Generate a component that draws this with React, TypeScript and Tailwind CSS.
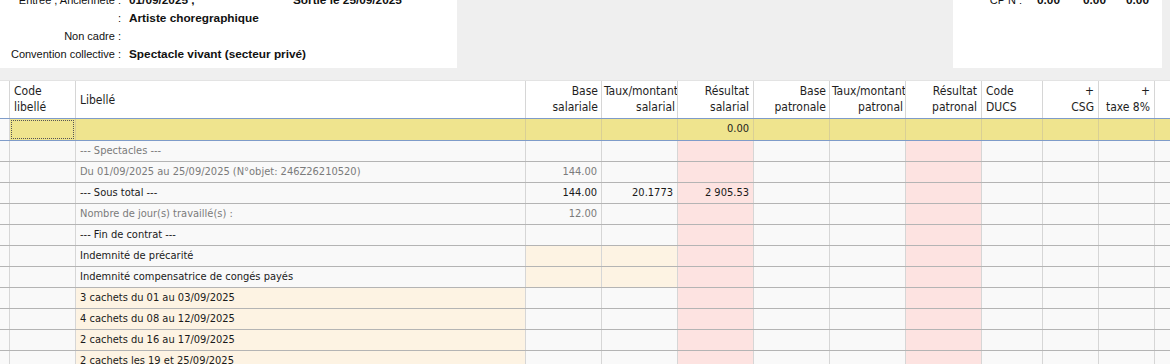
import React from "react";

type Row = {
  lib: string;
  gray?: boolean;
  base?: string;
  taux?: string;
  res?: string;
  creamBase?: boolean;
  creamLib?: boolean;
};

const rows: Row[] = [
  { lib: "--- Spectacles ---", gray: true },
  { lib: "Du 01/09/2025 au 25/09/2025 (N°objet: 246Z26210520)", gray: true, base: "144.00" },
  { lib: "--- Sous total ---", base: "144.00", taux: "20.1773", res: "2 905.53" },
  { lib: "Nombre de jour(s) travaillé(s) :", gray: true, base: "12.00" },
  { lib: "--- Fin de contrat ---" },
  { lib: "Indemnité de précarité", creamBase: true },
  { lib: "Indemnité compensatrice de congés payés", creamBase: true },
  { lib: "3 cachets du 01 au 03/09/2025", creamLib: true },
  { lib: "4 cachets du 08 au 12/09/2025", creamLib: true },
  { lib: "2 cachets du 16 au 17/09/2025", creamLib: true },
  { lib: "2 cachets les 19 et 25/09/2025", creamLib: true },
];

const cell = "h-full border-r border-[#d6d6d6] px-[4px] whitespace-nowrap overflow-hidden";

function Header() {
  return (
    <div className="flex h-[38px] bg-white border-b border-[#7f9cc9] text-[12px] leading-[16px] text-[#1e1e1e]">
      <div className="w-[10px] h-full border-r border-[#d6d6d6]" />
      <div className={`w-[66px] pt-[2px] ${cell}`}>Code<br />libellé</div>
      <div className={`w-[450px] flex items-center ${cell}`}>Libellé</div>
      <div className={`w-[76px] pt-[2px] text-right !px-[3px] ${cell}`}>Base<br />salariale</div>
      <div className={`w-[76px] pt-[2px] text-right !px-[2px] ${cell}`}>Taux/montant<br />salarial</div>
      <div className={`w-[76px] pt-[2px] text-right ${cell}`}>Résultat<br />salarial</div>
      <div className={`w-[76px] pt-[2px] text-right !px-[3px] ${cell}`}>Base<br />patronale</div>
      <div className={`w-[76px] pt-[2px] text-right !px-[2px] ${cell}`}>Taux/montant<br />patronal</div>
      <div className={`w-[76px] pt-[2px] text-right ${cell}`}>Résultat<br />patronal</div>
      <div className={`w-[61px] pt-[2px] ${cell}`}>Code<br />DUCS</div>
      <div className={`w-[56px] pt-[2px] text-right ${cell}`}>+<br />CSG</div>
      <div className={`w-[56px] pt-[2px] text-right ${cell}`}>+<br />taxe 8%</div>
      <div className="flex-1" />
    </div>
  );
}

function SelectedRow() {
  const y = "h-full border-r border-[#d9cf95]";
  return (
    <div className="flex h-[22px] bg-[#efe48e] border-b border-[#7f9cc9] text-[11px] text-[#1e1e1e]">
      <div className="w-[10px] h-full bg-[#f9f9f9] border-r border-[#d6d6d6]" />
      <div className={`w-[66px] p-[1px] ${y}`}>
        <div className="h-full border border-dotted border-[#555]" />
      </div>
      <div className={`w-[450px] ${y}`} />
      <div className={`w-[76px] ${y}`} />
      <div className={`w-[76px] ${y}`} />
      <div className={`w-[76px] flex items-center justify-end px-[4px] ${y}`}>0.00</div>
      <div className={`w-[76px] ${y}`} />
      <div className={`w-[76px] ${y}`} />
      <div className={`w-[76px] ${y}`} />
      <div className={`w-[61px] ${y}`} />
      <div className={`w-[56px] ${y}`} />
      <div className={`w-[56px] ${y}`} />
      <div className="flex-1" />
    </div>
  );
}

function DataRow({ r }: { r: Row }) {
  const txt = r.gray ? "text-[#7b7b7b]" : "text-[#1a1a1a]";
  const c = "h-full border-r border-[#d6d6d6] flex items-center px-[4px] whitespace-nowrap overflow-hidden";
  return (
    <div className={`flex h-[21px] border-b border-[#b4b4b4] bg-[#f9f9f9] text-[11px] ${txt}`}>
      <div className="w-[10px] h-full border-r border-[#d6d6d6]" />
      <div className={`w-[66px] ${c}`} />
      <div className={`w-[450px] ${c} ${r.creamLib ? "bg-[#fdf3e3]" : ""}`}>{r.lib}</div>
      <div className={`w-[76px] justify-end ${c} ${r.creamBase ? "bg-[#fdf3e3]" : ""}`}>{r.base}</div>
      <div className={`w-[76px] justify-end ${c} ${r.creamBase ? "bg-[#fdf3e3]" : ""}`}>{r.taux}</div>
      <div className={`w-[76px] justify-end bg-[#fde3e1] ${c}`}>{r.res}</div>
      <div className={`w-[76px] ${c}`} />
      <div className={`w-[76px] ${c}`} />
      <div className={`w-[76px] bg-[#fde3e1] ${c}`} />
      <div className={`w-[61px] ${c}`} />
      <div className={`w-[56px] ${c}`} />
      <div className={`w-[56px] ${c}`} />
      <div className="flex-1" />
    </div>
  );
}

export default function App() {
  return (
    <div className="w-[1170px] h-[364px] overflow-hidden bg-[#efefef] font-['DejaVu_Sans_Condensed','DejaVu_Sans',sans-serif] [font-stretch:condensed]">
      {/* top info panels, scrolled so the first line is half hidden */}
      <div className="flex h-[68px] justify-between font-['Liberation_Sans',sans-serif] text-[11px] leading-[18px] text-[#111]">
        <div className="w-[457px] bg-white overflow-hidden">
          <div className="-mt-[9px] grid grid-cols-[121px_1fr] gap-x-[8px]">
            <div className="text-right">Entrée , Ancienneté :</div>
            <div className="flex font-bold text-[11.8px]">
              <span className="w-[164px]">01/09/2025 ,</span>
              <span>Sortie le 25/09/2025</span>
            </div>
            <div className="text-right">:</div>
            <div className="font-bold text-[11.8px]">Artiste choregraphique</div>
            <div className="text-right">Non cadre :</div>
            <div />
            <div className="text-right">Convention collective :</div>
            <div className="font-bold text-[11.8px]">Spectacle vivant (secteur privé)</div>
          </div>
        </div>
        <div className="w-[209px] mr-[8px] bg-white overflow-hidden">
          <div className="-mt-[9px] flex">
            <span className="w-[69px] text-right">CP N :</span>
            <span className="w-[38px] text-right font-bold text-[11.8px]">0.00</span>
            <span className="w-[46px] text-right font-bold text-[11.8px]">0.00</span>
            <span className="w-[43px] text-right font-bold text-[11.8px]">0.00</span>
          </div>
        </div>
      </div>

      {/* grid */}
      <div className="mt-[12px] border-t border-[#e3e3e3]">
        <Header />
        <SelectedRow />
        {rows.map((r, i) => (
          <DataRow key={i} r={r} />
        ))}
      </div>
    </div>
  );
}
